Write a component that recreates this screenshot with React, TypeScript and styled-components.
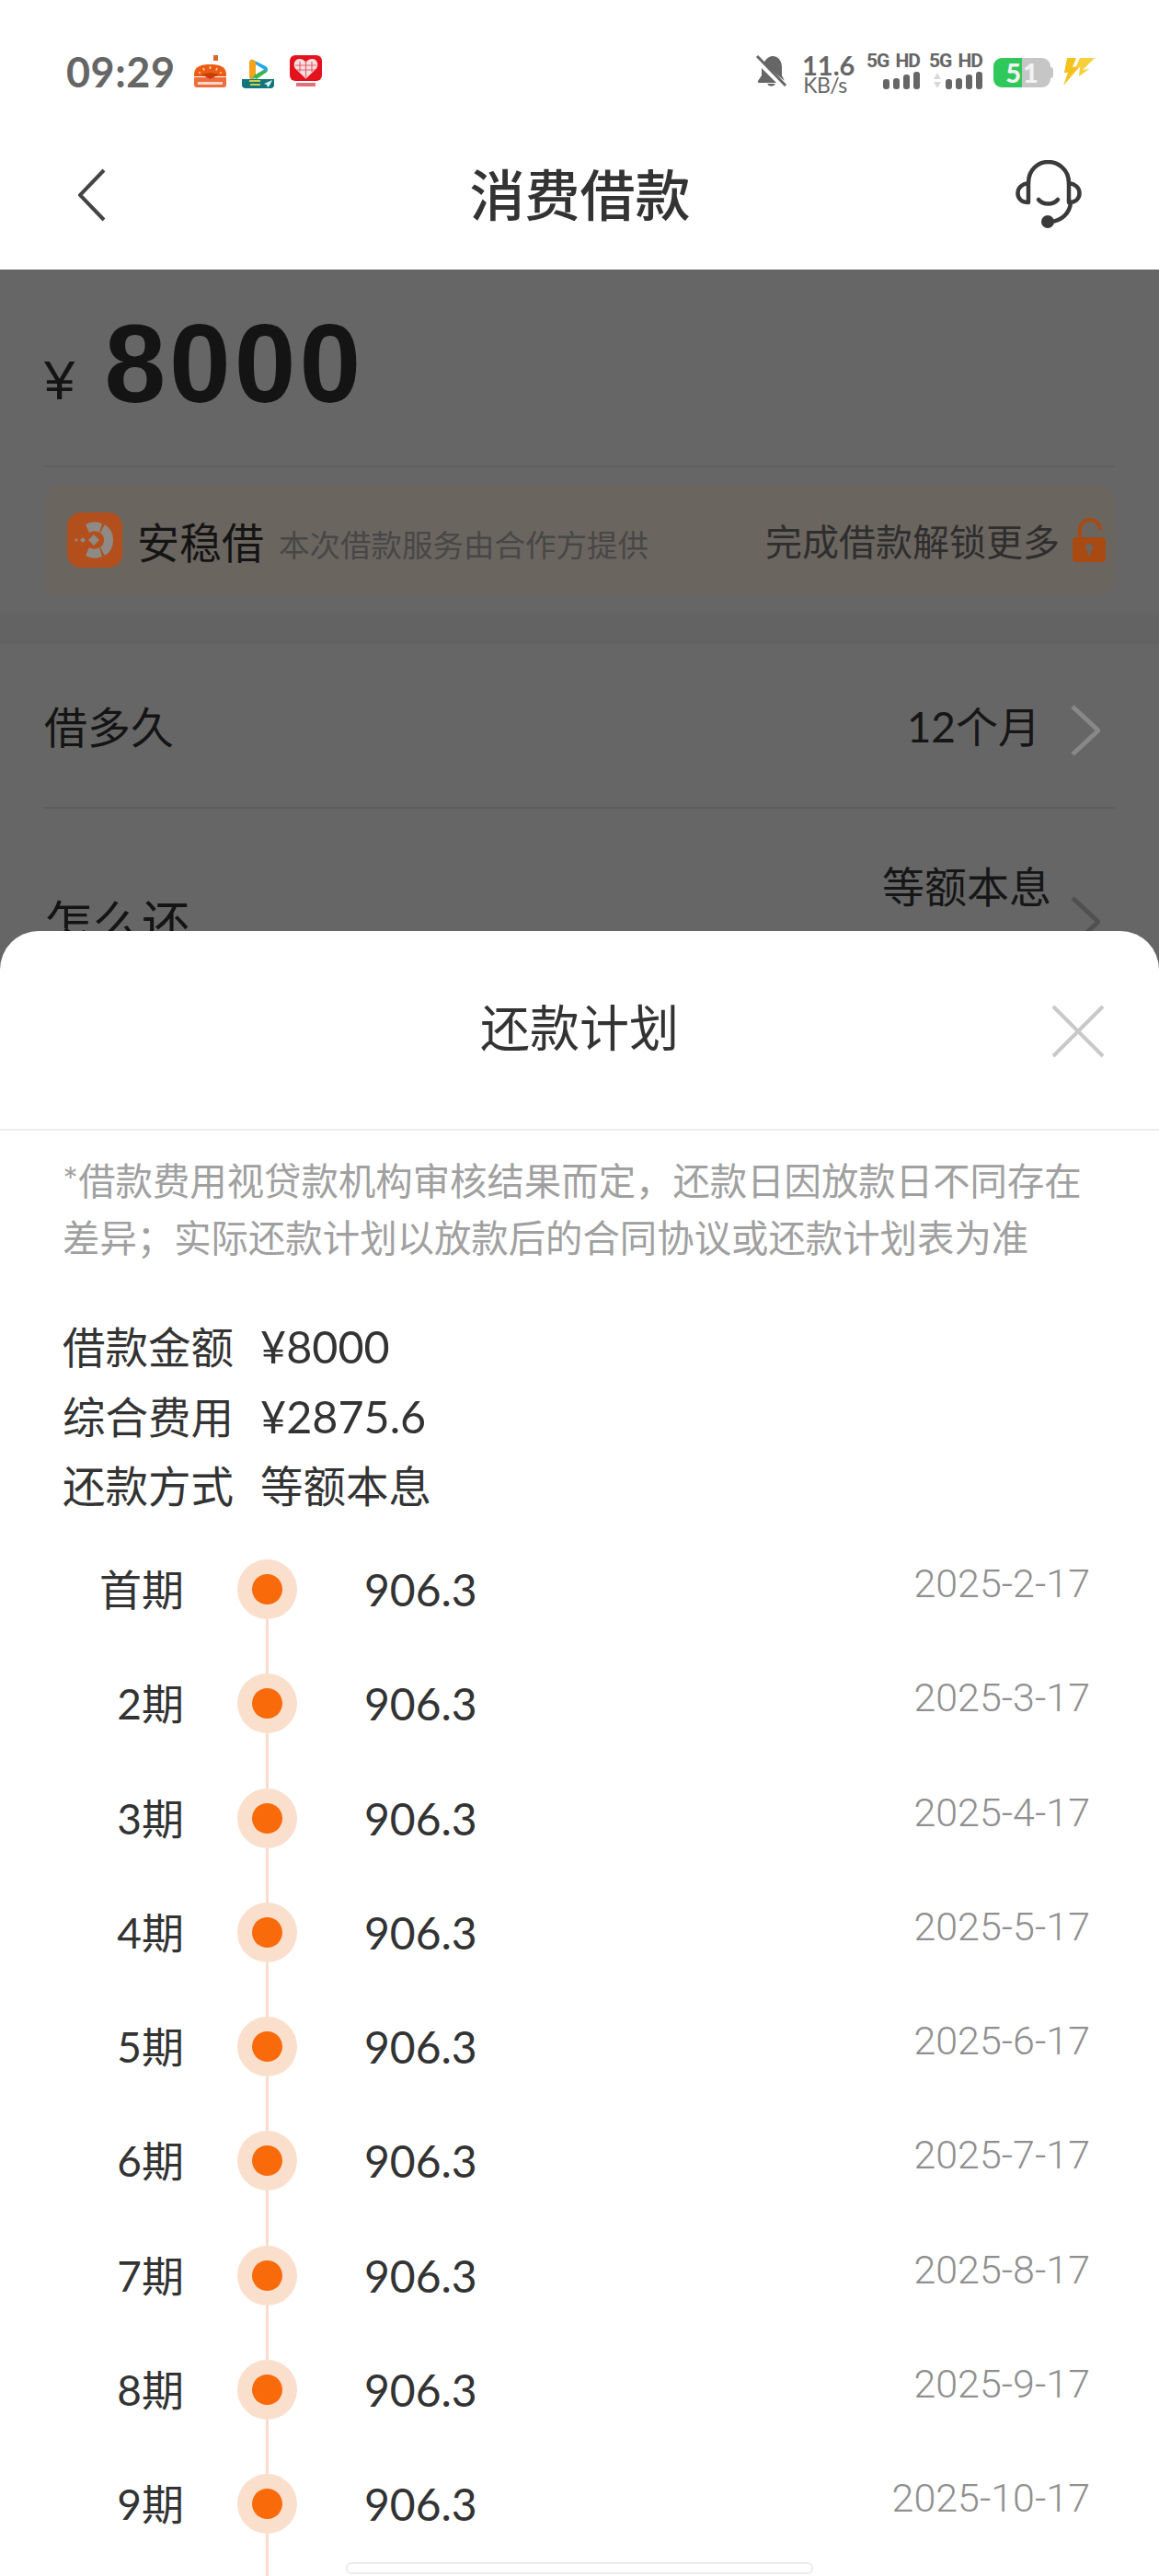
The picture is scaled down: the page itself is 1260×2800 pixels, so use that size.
import React from 'react';
import styled, { createGlobalStyle } from 'styled-components';

const GlobalStyle = createGlobalStyle`
  html, body {
    margin: 0;
    padding: 0;
    background: #fff;
  }
  * {
    box-sizing: border-box;
  }
`;

const Screen = styled.div`
  position: relative;
  width: 1260px;
  height: 2800px;
  overflow: hidden;
  background: #666;
  font-family: Lato, 'Noto Sans CJK SC', sans-serif;
`;

const TopArea = styled.div`
  background: #fff;
  height: 293px;
`;

const StatusBar = styled.div`
  display: flex;
  justify-content: space-between;
  align-items: flex-start;
  height: 130px;
  padding: 58px 70px 0 72px;
`;

const StatusLeft = styled.div`
  display: flex;
  align-items: center;
  gap: 17px;
`;

const Clock = styled.div`
  font-size: 45px;
  line-height: 40px;
  font-weight: 700;
  color: #666;
  margin-right: 3px;
  letter-spacing: 0.5px;
`;

const StatusRight = styled.div`
  display: flex;
  align-items: flex-start;
`;

const Speed = styled.div`
  width: 50px;
  margin: 0 20px 0 16px;
  color: #666;
  text-align: center;
  font-family: Lato, sans-serif;
`;

const SpeedValue = styled.div`
  font-size: 29px;
  line-height: 25px;
  font-weight: 700;
`;

const SpeedUnit = styled.div`
  font-size: 23px;
  line-height: 19px;
  letter-spacing: -0.5px;
`;

const Signal = styled.div`
  width: 58px;
  margin-right: 10px;
  display: flex;
  flex-direction: column;
  align-items: flex-end;
  gap: 4px;
`;

const SignalLabel = styled.div`
  font-family: Roboto, sans-serif;
  font-size: 21px;
  line-height: 16px;
  font-weight: 700;
  color: #666;
  white-space: pre;
  letter-spacing: -1px;
  word-spacing: 3px;
`;

const SignalRow = styled.div`
  display: flex;
  align-items: flex-end;
  gap: 4px;
`;

const SignalBar = styled.div<{ $h: number }>`
  width: 7px;
  height: ${props => props.$h}px;
  border-radius: 3px;
  background: #666;
`;

const Battery = styled.div`
  display: flex;
  align-items: center;
  margin: 5px 10px 0 2px;
`;

const BatteryBody = styled.div`
  display: flex;
  width: 62px;
  height: 32px;
  font-family: Lato, sans-serif;
  font-size: 29px;
  line-height: 32px;
  font-weight: 900;
  color: #f2f2f2;
`;

const BatteryFill = styled.div<{ $color: string; $side: 'left' | 'right' }>`
  flex: 1;
  background: ${props => props.$color};
  padding: 0 1px;
  text-align: ${props => (props.$side === 'left' ? 'right' : 'left')};
  border-radius: ${props => (props.$side === 'left' ? '9px 0 0 9px' : '0 9px 9px 0')};
`;

const BatteryNub = styled.div`
  width: 3px;
  height: 12px;
  border-radius: 0 3px 3px 0;
  background: #c6c6c6;
`;

const NavBar = styled.div`
  display: grid;
  grid-template-columns: 1fr auto 1fr;
  align-items: center;
  height: 163px;
  padding: 0 84px 0 85px;
`;

const NavTitle = styled.div`
  font-size: 60px;
  font-weight: 500;
  color: #333;
  line-height: 70px;
`;

const NavAction = styled.div`
  justify-self: end;
  display: flex;
`;

const AmountSection = styled.div`
  margin: 0 48px;
  height: 215px;
  padding-top: 42px;
  border-bottom: 2px solid #5f5f5f;
  color: #141414;
  font-family: 'Liberation Sans', sans-serif;
  line-height: 120px;
  white-space: nowrap;
`;

const Currency = styled.span`
  font-size: 60px;
  margin-right: 32px;
  vertical-align: 3px;
`;

const AmountValue = styled.span`
  font-size: 120px;
  font-weight: 700;
  letter-spacing: 4px;
`;

const ProductCard = styled.div`
  margin: 18px 48px;
  height: 122px;
  padding: 0 9px 0 25px;
  border-radius: 20px;
  background: #6b6560;
  display: flex;
  align-items: center;
`;

const ProductName = styled.div`
  margin-left: 16px;
  font-size: 46px;
  color: #141414;
`;

const ProductNote = styled.div`
  margin-left: 16px;
  padding-top: 6px;
  font-size: 33.5px;
  color: #474747;
  flex: 1;
`;

const UnlockText = styled.div`
  font-size: 40px;
  color: #2e2e2e;
  margin-right: 13px;
`;

const SectionBand = styled.div`
  height: 34px;
  background: #636363;
`;

const FormRow = styled.div<{ $height: number; $line: boolean }>`
  margin: 0 48px;
  height: ${props => props.$height}px;
  display: flex;
  justify-content: space-between;
  align-items: flex-start;
  border-bottom: ${props => (props.$line ? '2px solid #5c5c5c' : 'none')};
`;

const FormLabel = styled.div<{ $size: number; $top: number }>`
  font-size: ${props => props.$size}px;
  line-height: 60px;
  margin-top: ${props => props.$top}px;
  color: #141414;
`;

const FormValue = styled.div<{ $top: number; $gap: number }>`
  display: flex;
  align-items: flex-start;
  font-size: 46px;
  line-height: 60px;
  color: #161616;
  padding-top: ${props => props.$top}px;
  gap: ${props => props.$gap}px;
  padding-right: 16px;
`;

const ChevronBox = styled.svg<{ $top: number }>`
  margin-top: ${props => props.$top}px;
`;

const Sheet = styled.div`
  position: absolute;
  top: 1012px;
  left: 0;
  right: 0;
  bottom: 0;
  background: #fff;
  border-radius: 42px 42px 0 0;
`;

const SheetHeader = styled.div`
  position: relative;
  height: 217px;
  border-bottom: 2px solid #ececec;
  display: flex;
  align-items: center;
  justify-content: center;
`;

const SheetTitle = styled.div`
  font-size: 54px;
  line-height: 70px;
  color: #333;
  margin-bottom: 4px;
`;

const CloseButton = styled.div`
  position: absolute;
  right: 59px;
  top: 80px;
  display: flex;
`;

const SheetBody = styled.div`
  padding: 24px 60px 0 68px;
`;

const Disclaimer = styled.div`
  font-size: 40.4px;
  line-height: 62px;
  color: #a0a0a0;
`;

const Summary = styled.div`
  margin-top: 48px;
`;

const SummaryRow = styled.div`
  display: flex;
  align-items: baseline;
  gap: 29px;
  height: 76px;
  font-size: 46.5px;
  line-height: 76px;
  color: #333;
`;

const SummaryNumber = styled.span`
  font-size: 48.5px;
  line-height: 76px;
`;

const Timeline = styled.div`
  margin-top: 42px;
`;

const PlanRow = styled.div`
  display: flex;
  height: 124.25px;
  padding-right: 75px;
`;

const PlanLabel = styled.div`
  width: 200px;
  text-align: right;
  font-size: 46px;
  line-height: 65px;
  color: #333;
`;

const Rail = styled.div`
  width: 65px;
  margin: 0 73px 0 258px;
  display: flex;
  flex-direction: column;
  align-items: center;
`;

const PlanRail = styled(Rail)`
  margin-left: 58px;
`;

const TailRail = styled(Rail)`
  height: 60px;
`;

const DotOuter = styled.div`
  width: 65px;
  height: 65px;
  flex: none;
  border-radius: 50%;
  background: #fbdfcd;
  display: flex;
  align-items: center;
  justify-content: center;
`;

const DotInner = styled.div`
  width: 33px;
  height: 33px;
  border-radius: 50%;
  background: #f96a0a;
`;

const RailLine = styled.div`
  width: 3px;
  flex: 1;
  background: #fbdccb;
`;

const PlanAmount = styled.div`
  flex: 1;
  font-size: 48px;
  line-height: 65px;
  color: #333;
`;

const PlanDate = styled.div`
  font-family: Roboto, sans-serif;
  font-weight: 300;
  font-size: 43px;
  line-height: 52px;
  color: #8f8f8f;
`;

const HomeBar = styled.div`
  position: absolute;
  left: 376px;
  bottom: 2px;
  width: 508px;
  height: 13px;
  border-radius: 6px;
  background: #fff;
  border: 2px solid #ececec;
`;

const plan = [
  { label: '首期', date: '2025-2-17' },
  { label: '2期', date: '2025-3-17' },
  { label: '3期', date: '2025-4-17' },
  { label: '4期', date: '2025-5-17' },
  { label: '5期', date: '2025-6-17' },
  { label: '6期', date: '2025-7-17' },
  { label: '7期', date: '2025-8-17' },
  { label: '8期', date: '2025-9-17' },
  { label: '9期', date: '2025-10-17' }
];

function MealIcon() {
  return (
    <svg width="35" height="36" viewBox="0 0 35 36">
      <rect x="21" y="0" width="5" height="6" fill="#d9672c" />
      <path d="M0 21C0 12 8 10 17.5 10S35 12 35 21v2H0Z" fill="#ea5c13" />
      <path d="M0 24h35v8a3 3 0 0 1-3 3H3a3 3 0 0 1-3-3Z" fill="#ee6c3e" />
      <path d="M8 21l9.5 5 9.5-5-9.5-2Z" fill="#c83c08" />
      <path d="M17.5 12v3M10 14l1 2.500M25 14l-1 2.500M5 19h2M28 19h2" stroke="#ffd9a8" strokeWidth="1.500" />
      <rect x="4" y="29" width="27" height="3" fill="#ffd8c4" />
    </svg>
  );
}

function VideoIcon() {
  return (
    <svg width="35" height="36" viewBox="0 0 35 36">
      <path d="M8 8a3 3 0 0 1 4-3l14 7a4 4 0 0 1 0 7l-14 7a3 3 0 0 1-4-3Z" fill="#28a8e0" />
      <path d="M8 8a3 3 0 0 1 4-3l3 2v13l-3 6a3 3 0 0 1-4-3Z" fill="#f5a31c" />
      <path d="M12 24l3-4 13-4-2 3-10 7Z" fill="#3cb54a" />
      <path d="M15 10l9 5.500-9 5.500Z" fill="#fff" />
      <path d="M0 26h35v6a4 4 0 0 1-4 4H4a4 4 0 0 1-4-4Z" fill="#13757c" />
      <rect x="8" y="27" width="12" height="2" fill="#c9cf4a" />
      <rect x="9" y="31" width="11" height="2" fill="#c9cf4a" />
      <path d="M33 27l-9 4 3 1 1 3 2-2Z" fill="#d8f1f2" />
    </svg>
  );
}

function HeartIcon() {
  return (
    <svg width="35" height="36" viewBox="0 0 35 36">
      <rect x="0" y="0" width="35" height="28" rx="6" fill="#e4121d" />
      <path d="M17.500 25.500 6 14.500C3 10 5.500 4 10.500 4c3 0 5.500 1.500 7 4 1.500-2.500 4-4 7-4C29.500 4 32 10 29 14.500Z" fill="#f7dfe0" />
      <path d="M17.500 6v18M11 7v11M24 7v11M6 11h23M7.500 16h20" stroke="#e4626a" strokeWidth="1.200" />
      <rect x="7" y="30" width="21" height="4" fill="#e2727a" />
    </svg>
  );
}

function BellOff() {
  return (
    <svg width="34" height="36" viewBox="0 0 34 36" style={{ marginTop: 2 }}>
      <path
        d="M8 9C11 3 15 1 18 1c6 0 10 5 10 12v9l3 6L8 9ZM6 14v8l-4 6c-.5 1 0 2 1 2h19L6 14ZM12 31a5 5 0 0 0 9 0Z"
        fill="#666"
      />
      <path d="M1 1 32 33" stroke="#666" strokeWidth="3" />
    </svg>
  );
}

function BoltIcon() {
  return (
    <svg width="35" height="32" viewBox="0 0 35 32" style={{ marginTop: 4 }}>
      <path d="M5 1h10L11 11 20 9 1 31 6 17 2 17Z" fill="#f4c21f" />
      <path d="M19 1h16L22 14l7-1-11 8 1-10-5 1Z" fill="#f7cf3a" />
    </svg>
  );
}

function SignalBars() {
  return (
    <>
      <SignalBar $h={11} />
      <SignalBar $h={12} />
      <SignalBar $h={16} />
      <SignalBar $h={19} />
    </>
  );
}

function Headset() {
  return (
    <svg width="72" height="76" viewBox="0 0 72 76" fill="none" stroke="#3a3a3a" strokeWidth="4.500" strokeLinecap="round">
      <path d="M14 25C14 10 25 2 35.500 2S58 10 58 25" />
      <path d="M14 25C7 26 2.500 30 2.500 36S7 46 14 46Z" strokeLinejoin="round" />
      <path d="M58 25C65 26 69.500 30 69.500 36S65 46 58 46Z" strokeLinejoin="round" />
      <path d="M60 46C59 58 50 66 38 67" />
      <path d="M25 43C30 49 41 49 46 43" />
      <circle cx="35" cy="67" r="7" fill="#3a3a3a" stroke="none" />
    </svg>
  );
}

function ProductLogo() {
  return (
    <svg width="60" height="60" viewBox="0 0 60 60">
      <rect width="60" height="60" rx="15" fill="#b34f1c" />
      <path d="M20 13A20 20 0 0 1 38 12L35 22A10 10 0 0 0 24 22Z" fill="#8f8a85" />
      <path d="M41 13A20 20 0 0 1 50 30 20 20 0 0 1 41 47L36 38A10 10 0 0 0 40 30 10 10 0 0 0 36 22Z" fill="#8f8a85" />
      <path d="M20 47A20 20 0 0 0 38 48L35 38A10 10 0 0 1 24 38Z" fill="#8f8a85" />
      <path d="M29 24 35 30 29 36 23 30Z" fill="#8f8a85" />
      <path d="M17 27l3 3-3 3-3-3ZM10 28l2 2-2 2-2-2Z" fill="#8f8a85" />
    </svg>
  );
}

function LockIcon() {
  return (
    <svg width="38" height="48" viewBox="0 0 38 48">
      <path d="M9 22V13C9 6 14 2 20 2s11 4 11 11" fill="none" stroke="#a84a12" strokeWidth="4" />
      <rect x="1" y="21" width="36" height="27" rx="4" fill="#a84a12" />
      <circle cx="19" cy="32" r="4" fill="#6b6560" />
      <rect x="17.500" y="33" width="3" height="8" fill="#6b6560" />
    </svg>
  );
}

function Chevron({ color, top }: { color: string; top: number }) {
  return (
    <ChevronBox $top={top} width="32" height="56" viewBox="0 0 32 56" fill="none">
      <path d="M2 2 30 28 2 54" stroke={color} strokeWidth="5" />
    </ChevronBox>
  );
}

export default function App() {
  return (
    <>
      <GlobalStyle />
      <Screen>
        <TopArea>
          <StatusBar>
            <StatusLeft>
              <Clock>09:29</Clock>
              <MealIcon />
              <VideoIcon />
              <HeartIcon />
            </StatusLeft>
            <StatusRight>
              <BellOff />
              <Speed>
                <SpeedValue>11.6</SpeedValue>
                <SpeedUnit>KB/s</SpeedUnit>
              </Speed>
              <Signal>
                <SignalLabel>5G HD</SignalLabel>
                <SignalRow>
                  <SignalBars />
                </SignalRow>
              </Signal>
              <Signal>
                <SignalLabel>5G HD</SignalLabel>
                <SignalRow>
                  <svg width="10" height="19" viewBox="0 0 10 19">
                    <path d="M5 1 9 8H1ZM5 18 1 11H9Z" fill="#d8d8d8" />
                  </svg>
                  <SignalBars />
                </SignalRow>
              </Signal>
              <Battery>
                <BatteryBody>
                  <BatteryFill $color="#2fc85a" $side="left">5</BatteryFill>
                  <BatteryFill $color="#c6c6c6" $side="right">1</BatteryFill>
                </BatteryBody>
                <BatteryNub />
              </Battery>
              <BoltIcon />
            </StatusRight>
          </StatusBar>
          <NavBar>
            <svg width="30" height="58" viewBox="0 0 30 58" fill="none">
              <path d="M28 2 2 29 28 56" stroke="#444" strokeWidth="4" />
            </svg>
            <NavTitle>消费借款</NavTitle>
            <NavAction>
              <Headset />
            </NavAction>
          </NavBar>
        </TopArea>

        <AmountSection>
          <Currency>¥</Currency>
          <AmountValue>8000</AmountValue>
        </AmountSection>

        <ProductCard>
          <ProductLogo />
          <ProductName>安稳借</ProductName>
          <ProductNote>本次借款服务由合作方提供</ProductNote>
          <UnlockText>完成借款解锁更多</UnlockText>
          <LockIcon />
        </ProductCard>
        <SectionBand />

        <FormRow $height={179} $line>
          <FormLabel $size={47} $top={60}>借多久</FormLabel>
          <FormValue $top={60} $gap={33}>
            12个月
            <Chevron color="#888" top={6} />
          </FormValue>
        </FormRow>
        <FormRow $height={240} $line={false}>
          <FormLabel $size={53} $top={95}>怎么还</FormLabel>
          <FormValue $top={55} $gap={21}>
            等额本息
            <Chevron color="#505050" top={40} />
          </FormValue>
        </FormRow>

        <Sheet>
          <SheetHeader>
            <SheetTitle>还款计划</SheetTitle>
            <CloseButton>
              <svg width="58" height="58" viewBox="0 0 58 58" fill="none">
                <path d="M2 2 56 56M56 2 2 56" stroke="#c8c8c8" strokeWidth="4" />
              </svg>
            </CloseButton>
          </SheetHeader>
          <SheetBody>
            <Disclaimer>
              *借款费用视贷款机构审核结果而定，还款日因放款日不同存在差异；实际还款计划以放款后的合同协议或还款计划表为准
            </Disclaimer>
            <Summary>
              <SummaryRow>
                <span>借款金额</span>
                <SummaryNumber>¥8000</SummaryNumber>
              </SummaryRow>
              <SummaryRow>
                <span>综合费用</span>
                <SummaryNumber>¥2875.6</SummaryNumber>
              </SummaryRow>
              <SummaryRow>
                <span>还款方式</span>
                <span>等额本息</span>
              </SummaryRow>
            </Summary>
          </SheetBody>
          <Timeline>
            {plan.map(item => (
              <PlanRow key={item.label}>
                <PlanLabel>{item.label}</PlanLabel>
                <PlanRail>
                  <DotOuter>
                    <DotInner />
                  </DotOuter>
                  <RailLine />
                </PlanRail>
                <PlanAmount>906.3</PlanAmount>
                <PlanDate>{item.date}</PlanDate>
              </PlanRow>
            ))}
            <TailRail>
              <RailLine />
            </TailRail>
          </Timeline>
          <HomeBar />
        </Sheet>
      </Screen>
    </>
  );
}
